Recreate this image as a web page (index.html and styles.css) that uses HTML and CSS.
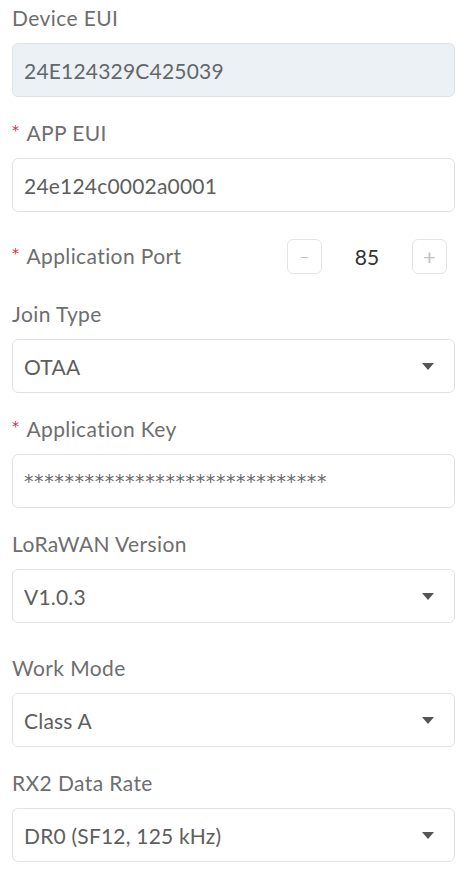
FILE: index.html
```html
<!DOCTYPE html>
<html>
<head>
<meta charset="utf-8">
<link rel="stylesheet" href="styles.css">
</head>
<body>
<div class="form">
  <div class="field">
    <div class="label">Device EUI</div>
    <div class="input disabled">24E124329C425039</div>
  </div>
  <div class="field">
    <div class="label"><span class="req">*</span>APP EUI</div>
    <div class="input">24e124c0002a0001</div>
  </div>
  <div class="port-row">
    <div class="label"><span class="req">*</span>Application Port</div>
    <div class="stepper">
      <div class="step-btn minus">&minus;</div>
      <div class="step-val">85</div>
      <div class="step-btn">+</div>
    </div>
  </div>
  <div class="field">
    <div class="label">Join Type</div>
    <div class="input select">OTAA<span class="arrow"></span></div>
  </div>
  <div class="field">
    <div class="label"><span class="req">*</span>Application Key</div>
    <div class="input key">******************************</div>
  </div>
  <div class="field wide">
    <div class="label">LoRaWAN Version</div>
    <div class="input select">V1.0.3<span class="arrow"></span></div>
  </div>
  <div class="field">
    <div class="label">Work Mode</div>
    <div class="input select">Class A<span class="arrow"></span></div>
  </div>
  <div class="field">
    <div class="label">RX2 Data Rate</div>
    <div class="input select">DR0 (SF12, 125 kHz)<span class="arrow"></span></div>
  </div>
</div>
</body>
</html>
```
FILE: styles.css
```css
html, body {
  margin: 0;
  padding: 0;
  background: #ffffff;
}
body {
  font-family: Lato, "Noto Sans", sans-serif;
  color: #666666;
}
.form {
  padding: 6px 11px 0 12px;
  display: flex;
  flex-direction: column;
}
.field {
  display: flex;
  flex-direction: column;
  gap: 13px;
  margin-bottom: 24px;
}
.field.wide {
  margin-bottom: 33px;
}
.label {
  font-size: 21px;
  line-height: 24px;
  letter-spacing: 0.4px;
  color: #6e6e6e;
  display: flex;
  align-items: center;
}
.req {
  font-family: "DejaVu Sans", sans-serif;
  color: #d6263a;
  font-size: 14px;
  margin-right: 7px;
  position: relative;
  top: -3px;
}
.input {
  box-sizing: border-box;
  height: 54px;
  border: 1px solid #e2e2e2;
  border-radius: 6px;
  padding: 0 11px;
  display: flex;
  align-items: center;
  font-size: 21px;
  letter-spacing: 0.2px;
  color: #5e5e5e;
  background: #ffffff;
  position: relative;
}
.input.disabled {
  background: #ebf1f5;
  border-color: #dde3e7;
  color: #62676b;
}
.input.key {
  font-family: "DejaVu Sans", sans-serif;
  font-size: 19px;
  letter-spacing: 0.6px;
  color: #6a6a6a;
}
.arrow {
  position: absolute;
  right: 20px;
  top: 50%;
  margin-top: -3px;
  width: 0;
  height: 0;
  border-left: 6.5px solid transparent;
  border-right: 6.5px solid transparent;
  border-top: 7px solid #555555;
}
.port-row {
  display: flex;
  align-items: center;
  justify-content: space-between;
  height: 36px;
  margin-top: 2px;
  margin-bottom: 28px;
  padding-right: 8px;
}
.stepper {
  display: flex;
  align-items: center;
}
.step-btn {
  box-sizing: border-box;
  width: 35px;
  height: 35px;
  border: 1px solid #e4e4e4;
  border-radius: 6px;
  display: flex;
  align-items: center;
  justify-content: center;
  color: #c2c2c2;
  font-size: 22px;
}
.step-btn.minus {
  font-size: 16px;
}
.step-val {
  width: 90px;
  text-align: center;
  font-size: 21px;
  color: #333333;
}
```
